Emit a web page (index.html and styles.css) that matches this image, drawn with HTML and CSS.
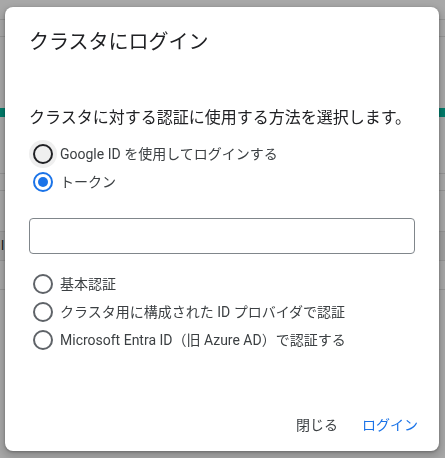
FILE: index.html
```html
<!DOCTYPE html>
<html lang="ja">
<head>
<meta charset="utf-8">
<title>クラスタにログイン</title>
<link rel="stylesheet" href="styles.css">
</head>
<body>
<div class="page">
  <div class="pg-row pg-r1"></div>
  <div class="pg-row pg-r2"></div>
  <div class="pg-space pg-s1"></div>
  <div class="pg-teal"></div>
  <div class="pg-space pg-s2"></div>
  <div class="pg-row pg-r3"></div>
  <div class="pg-row pg-r4"></div>
  <div class="pg-row pg-r5"></div>
  <div class="pg-row pg-band"><span class="pg-frag">l</span></div>
  <div class="pg-row pg-r6"></div>
</div>
<div class="scrim"></div>
<div class="dialog" role="dialog">
  <h2 class="dialog-title">クラスタにログイン</h2>
  <p class="dialog-desc">クラスタに対する認証に使用する方法を選択します。</p>
  <div class="radio-group">
    <label class="radio-row">
      <span class="radio radio-focus"><span class="radio-circle radio-dark"></span></span>
      <span class="radio-label">Google ID を使用してログインする</span>
    </label>
    <label class="radio-row">
      <span class="radio"><span class="radio-circle radio-checked"><span class="radio-dot"></span></span></span>
      <span class="radio-label">トークン</span>
    </label>
  </div>
  <div class="field"></div>
  <div class="radio-group group-2">
    <label class="radio-row">
      <span class="radio"><span class="radio-circle"></span></span>
      <span class="radio-label">基本認証</span>
    </label>
    <label class="radio-row">
      <span class="radio"><span class="radio-circle"></span></span>
      <span class="radio-label">クラスタ用に構成された ID プロバイダで認証</span>
    </label>
    <label class="radio-row">
      <span class="radio"><span class="radio-circle"></span></span>
      <span class="radio-label">Microsoft Entra ID（旧 Azure AD）で認証する</span>
    </label>
  </div>
  <div class="actions">
    <button class="btn btn-close">閉じる</button>
    <button class="btn btn-login">ログイン</button>
  </div>
</div>
</body>
</html>
```
FILE: styles.css
```css
html, body {
  margin: 0;
  padding: 0;
  width: 445px;
  height: 458px;
  overflow: hidden;
  background: #ffffff;
  font-family: Roboto, "Noto Sans CJK JP", sans-serif;
}

.page {
  width: 445px;
}

.pg-row {
  border-bottom: 1px solid #e2e2e2;
}

.pg-r1 { height: 19px; }
.pg-r2 { height: 16px; }
.pg-s1 { height: 71px; }
.pg-teal { height: 9px; background: #00bca2; }
.pg-s2 { height: 56px; border-bottom: 1px solid #e2e2e2; }
.pg-r3 { height: 16px; }
.pg-r4 { height: 40px; }
.pg-band { height: 28px; background: #f3f3f3; display: flex; align-items: center; }
.pg-r5 { height: 0; display: none; }
.pg-r6 { height: 28px; }

.pg-frag {
  font-size: 13px;
  color: #222;
  margin-left: 1px;
  line-height: 14px;
}

.scrim {
  position: fixed;
  inset: 0;
  background: rgba(0, 0, 0, 0.34);
}

.dialog {
  position: fixed;
  left: 5px;
  top: 7px;
  width: 434px;
  height: 444px;
  box-sizing: border-box;
  padding: 23px 13px 8px 24px;
  background: #ffffff;
  border-radius: 8px;
  box-shadow: 0 1px 3px rgba(0, 0, 0, 0.3), 0 4px 8px 3px rgba(0, 0, 0, 0.15);
  display: flex;
  flex-direction: column;
}

.dialog-title {
  margin: 0;
  font-size: 20px;
  line-height: 24px;
  font-weight: 400;
  color: #202124;
}

.dialog-desc {
  margin: 52px 0 0 0;
  font-size: 16px;
  line-height: 24px;
  color: #202124;
}

.radio-group {
  margin-top: 10px;
  display: flex;
  flex-direction: column;
}

.group-2 {
  margin-top: 16px;
}

.radio-row {
  height: 28px;
  display: flex;
  align-items: center;
}

.radio {
  width: 28px;
  height: 28px;
  border-radius: 50%;
  display: flex;
  align-items: center;
  justify-content: center;
  flex: none;
}

.radio-focus {
  background: #efefef;
}

.radio-circle {
  width: 20px;
  height: 20px;
  box-sizing: border-box;
  border: 2px solid #5f6368;
  border-radius: 50%;
  display: flex;
  align-items: center;
  justify-content: center;
}

.radio-dark {
  border-color: #202124;
}

.radio-checked {
  border-color: #1a73e8;
}

.radio-dot {
  width: 10px;
  height: 10px;
  border-radius: 50%;
  background: #1a73e8;
}

.radio-label {
  margin-left: 3px;
  font-size: 14px;
  line-height: 20px;
  color: #3c4043;
  white-space: nowrap;
}

.field {
  margin-top: 22px;
  width: 386px;
  height: 36px;
  box-sizing: border-box;
  border: 1px solid #80868b;
  border-radius: 4px;
}

.actions {
  margin-top: auto;
  display: flex;
  justify-content: flex-end;
  gap: 8px;
}

.btn {
  height: 36px;
  padding: 0 8px;
  border: none;
  background: transparent;
  font-family: Roboto, "Noto Sans CJK JP", sans-serif;
  font-size: 14px;
  line-height: 20px;
  border-radius: 4px;
}

.btn-close {
  color: #3c4043;
}

.btn-login {
  color: #1a73e8;
}
```
